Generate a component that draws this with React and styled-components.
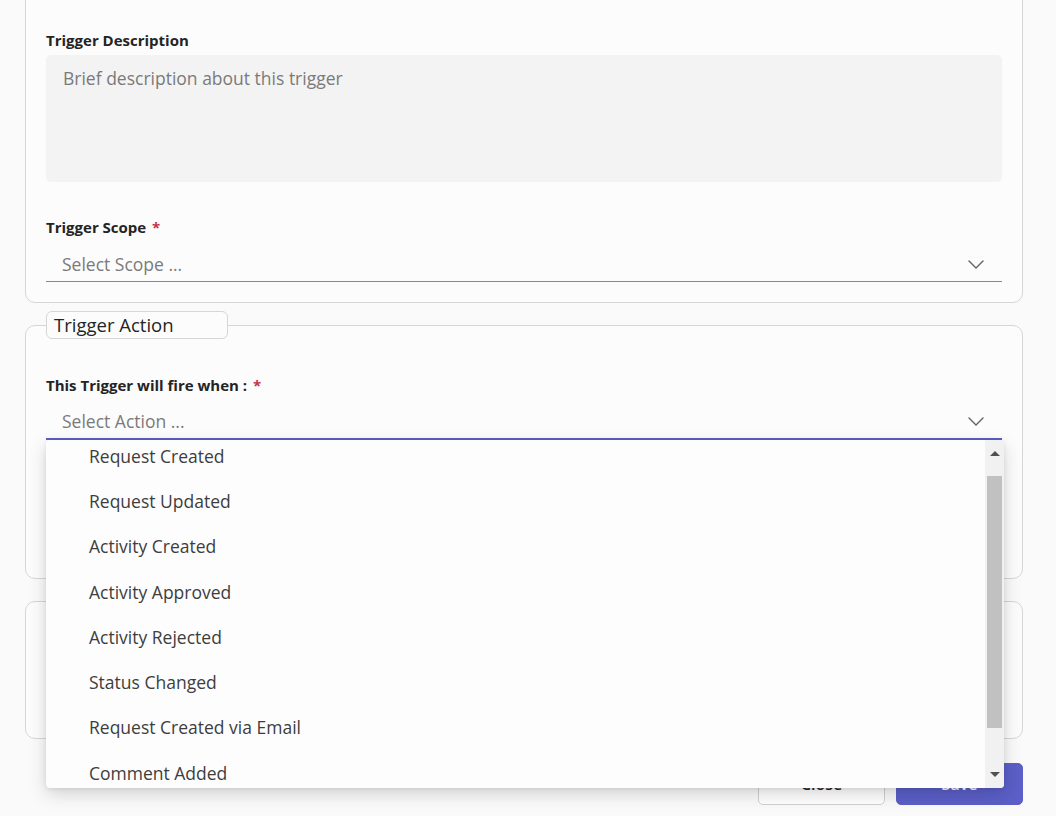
import React from 'react';
import styled, { createGlobalStyle } from 'styled-components';

const actions = [
  'Request Created',
  'Request Updated',
  'Activity Created',
  'Activity Approved',
  'Activity Rejected',
  'Status Changed',
  'Request Created via Email',
  'Comment Added',
];

const Chevron = () => (
  <svg width="18" height="18" viewBox="0 0 18 18" fill="none">
    <path d="M2 6l7 7 7-7" stroke="#616161" strokeWidth="1.4" strokeLinecap="round" strokeLinejoin="round" />
  </svg>
);

const App = () => {
  return (
    <Page>
      <GlobalStyle />
      <Card>
        <Field>
          <Label>Trigger Description</Label>
          <TextArea placeholder="Brief description about this trigger" />
        </Field>
        <Field gap={36}>
          <Label select>Trigger Scope <Required>*</Required></Label>
          <Select>
            <Placeholder>Select Scope ...</Placeholder>
            <Chevron />
          </Select>
        </Field>
      </Card>

      <FieldSet>
        <Legend>Trigger Action</Legend>
        <Field>
          <Label select>This Trigger will fire when : <Required>*</Required></Label>
          <Select open>
            <Placeholder>Select Action ...</Placeholder>
            <Chevron />
            <Dropdown>
              <ListViewport>
                <List>
                  {actions.map(a => <Item key={a}>{a}</Item>)}
                </List>
              </ListViewport>
              <ScrollBar>
                <Arrow up />
                <Track><Thumb /></Track>
                <Arrow />
              </ScrollBar>
            </Dropdown>
          </Select>
        </Field>
      </FieldSet>

      <EmptyCard />

      <Buttons>
        <Button>Close</Button>
        <Button primary>Save</Button>
      </Buttons>
    </Page>
  );
}

export default App;



const GlobalStyle = createGlobalStyle`
html, body {
  margin: 0;
  padding: 0;
  background: #fafafa;
  font-family: "Segoe UI", "Open Sans", "Noto Sans", sans-serif;
  color: #242424;
  overflow: hidden;
}
`;

const Page = styled.div`
padding: 0 33px 40px 25px;
margin-top: -20px;
`;

const Card = styled.div`
border: 1px solid #d6d6d6;
border-radius: 10px;
padding: 50px 20px 20px;
background: #fcfcfc;
`;

const Field = styled.div`
display: flex;
flex-direction: column;
margin-top: ${p => p.gap || 0}px;
`;

const Label = styled.label`
font-size: 15px;
font-weight: 700;
line-height: 18px;
color: #242424;
margin-bottom: ${p => p.select ? 10 : 6}px;
`;

const Required = styled.span`
color: #c4314b;
margin-left: 2px;
`;

const TextArea = styled.textarea`
height: 127px;
box-sizing: border-box;
border: none;
border-radius: 5px;
background: #f3f3f3;
padding: 11px 17px;
font-family: inherit;
font-size: 17.5px;
resize: none;
outline: none;
&::placeholder {
  color: #7a7a7a;
}
`;

const Select = styled.div`
position: relative;
height: 36px;
box-sizing: border-box;
display: flex;
align-items: center;
justify-content: space-between;
padding: 0 17px 0 16px;
border-bottom: ${p => p.open ? '2px solid #5b5fc7' : '1px solid #8a8a8a'};
`;

const Placeholder = styled.span`
font-size: 17.5px;
color: #7a7a7a;
`;

const FieldSet = styled.fieldset`
margin: 8px 0 0;
min-width: 0;
border: 1px solid #d6d6d6;
border-radius: 10px;
padding: 37px 20px 138px;
background: #fcfcfc;
`;

const Legend = styled.legend`
box-sizing: border-box;
width: 182px;
height: 28px;
padding: 0 7px;
border: 1px solid #d6d6d6;
border-radius: 6px;
font-size: 18.5px;
line-height: 25px;
color: #242424;
background: #fcfcfc;
`;

const EmptyCard = styled.div`
margin-top: 22px;
height: 138px;
box-sizing: border-box;
border: 1px solid #d6d6d6;
border-radius: 10px;
background: #fcfcfc;
`;

const Buttons = styled.div`
display: flex;
justify-content: flex-end;
gap: 11px;
margin-top: 24px;
`;

const Button = styled.button`
width: 127px;
height: 42px;
border-radius: 5px;
font-family: inherit;
font-size: 16px;
font-weight: 600;
border: 1px solid ${p => p.primary ? '#5b5fc7' : '#d1d1d1'};
background: ${p => p.primary ? '#5b5fc7' : '#ffffff'};
color: ${p => p.primary ? '#ffffff' : '#242424'};
`;

const Dropdown = styled.div`
position: absolute;
top: calc(100% + 2px);
left: 0;
right: -2px;
height: 348px;
display: flex;
background: #fdfdfd;
border-radius: 4px;
box-shadow: 0 6px 18px rgba(0, 0, 0, 0.16), 0 1px 4px rgba(0, 0, 0, 0.08);
z-index: 10;
overflow: hidden;
`;

const ListViewport = styled.div`
flex: 1;
overflow: hidden;
`;

const List = styled.ul`
list-style: none;
margin: -7px 0 0;
padding: 0;
`;

const Item = styled.li`
height: 45.3px;
display: flex;
align-items: center;
padding-left: 43px;
font-size: 17.5px;
color: #3d3d3d;
`;

const ScrollBar = styled.div`
width: 19px;
display: flex;
flex-direction: column;
background: #f1f1f1;
`;

const Arrow = styled.div`
height: 30px;
display: flex;
align-items: ${p => p.up ? 'flex-start' : 'flex-end'};
justify-content: center;
padding: ${p => p.up ? '11px 0 0' : '0 0 11px'};
box-sizing: border-box;
&::before {
  content: '';
  border-left: 5px solid transparent;
  border-right: 5px solid transparent;
  ${p => p.up ? 'border-bottom: 5px solid #505050;' : 'border-top: 5px solid #505050;'}
}
`;

const Track = styled.div`
flex: 1;
padding: 6px 2px 0;
`;

const Thumb = styled.div`
height: 252px;
background: #c1c1c1;
`;
